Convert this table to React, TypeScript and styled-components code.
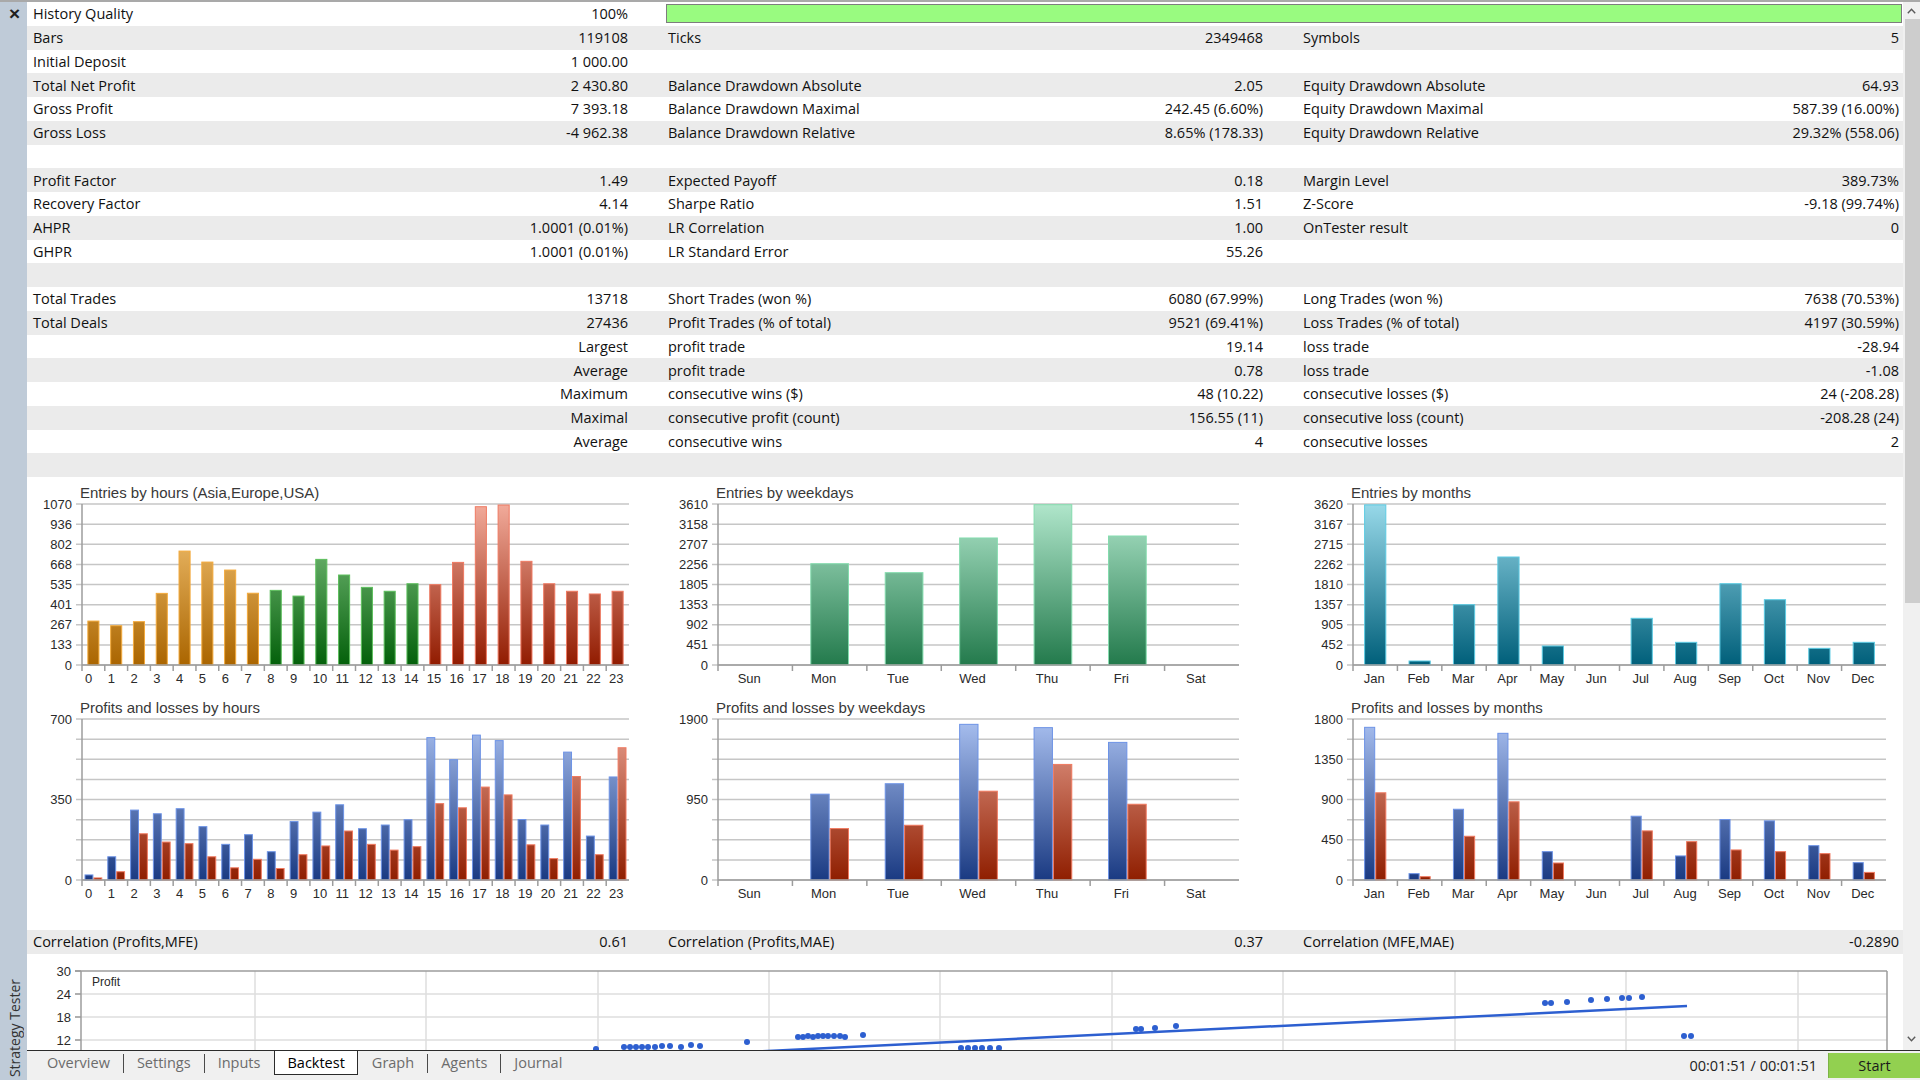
import React from 'react';
import styled, { createGlobalStyle } from 'styled-components';

const GlobalStyle = createGlobalStyle`
  html, body {
    margin: 0;
    padding: 0;
    width: 1920px;
    height: 1080px;
    overflow: hidden;
    background: #ffffff;
  }
  body {
    font-family: 'Open Sans', 'Noto Sans', sans-serif;
    color: #111111;
  }
`;

const ROW_H = 23.75;
const COLS = '636px 635px 1fr';

const PLOT_X = 55;
const PLOT_TOP = 27;
const PLOT_BOTTOM = 188;
const CHART_W = 635;
const CHART_H = 215;

const Page = styled.div`
  display: flex;
  width: 1920px;
  height: 1080px;
  border-top: 2px solid #a9a9a9;
  box-sizing: border-box;
`;

const Sidebar = styled.aside`
  flex: none;
  width: 27px;
  background: #bfcbd8;
  display: flex;
  flex-direction: column;
  justify-content: space-between;
  align-items: center;
  padding: 1px 0 6px 2px;
  box-sizing: border-box;
`;

const CloseGlyph = styled.span`
  font-family: 'Liberation Sans', sans-serif;
  font-weight: 700;
  font-size: 19px;
  line-height: 22px;
  color: #202020;
`;

const SideTitle = styled.span`
  writing-mode: vertical-rl;
  transform: rotate(180deg);
  font-size: 14px;
  color: #333333;
  white-space: nowrap;
  margin-bottom: -3px;
`;

const Main = styled.div`
  flex: 1;
  min-width: 0;
  display: flex;
  flex-direction: column;
`;

const Body = styled.div`
  flex: 1;
  min-height: 0;
  display: flex;
  overflow: hidden;
`;

const Report = styled.div`
  flex: 1;
  min-width: 0;
  display: flex;
  flex-direction: column;
`;

const StatRow = styled.div<{ $shade: boolean }>`
  flex: none;
  display: grid;
  grid-template-columns: ${COLS};
  height: ${ROW_H}px;
  align-items: center;
  background: ${({ $shade }) => ($shade ? '#ebebeb' : '#ffffff')};
  font-size: 14.5px;
  white-space: nowrap;
`;

const Cell = styled.div<{ $last?: boolean }>`
  display: flex;
  justify-content: space-between;
  align-items: center;
  padding: 0 ${({ $last }) => ($last ? 4 : 35)}px 0 5px;
  &:first-child {
    padding-left: 6px;
  }
`;

const QualityBar = styled.div`
  grid-column: 2 / 4;
  height: 19px;
  margin: 0 1px 0 3px;
  background: #99fb80;
  border: 1px solid #7d7d7d;
  box-sizing: border-box;
`;

const ChartArea = styled.div`
  flex: none;
  height: 453px;
  display: grid;
  grid-template-columns: ${COLS};
  align-content: start;
`;

const ChartColumn = styled.div`
  display: flex;
  flex-direction: column;
`;

const ChartSvg = styled.svg`
  display: block;
  overflow: visible;
`;

const ChartTitle = styled.text`
  font-family: 'Liberation Sans', Arial, sans-serif;
  font-size: 15px;
  fill: #383838;
`;

const TickText = styled.text`
  font-family: 'Liberation Sans', Arial, sans-serif;
  font-size: 13px;
  fill: #2a2a2a;
`;

const ScatterWrap = styled.div`
  flex: 1;
  min-height: 0;
  overflow: hidden;
`;

const Scrollbar = styled.div`
  flex: none;
  width: 17px;
  background: #f0f0f0;
  display: flex;
  flex-direction: column;
`;

const ScrollButton = styled.div<{ $bottom?: boolean }>`
  height: 17px;
  display: flex;
  align-items: center;
  justify-content: center;
  margin-bottom: ${({ $bottom }) => ($bottom ? 3 : 0)}px;
`;

const ScrollThumb = styled.div`
  height: 584px;
  margin: 0 0 0 2px;
  background: #cdcdcd;
`;

const ScrollSpacer = styled.div`
  flex: 1;
`;

const TabBar = styled.div`
  flex: none;
  height: 30px;
  display: flex;
  align-items: flex-start;
  background: #f0f0f0;
  border-top: 1.5px solid #2b2b2b;
  box-sizing: border-box;
  padding-left: 7px;
  font-size: 14.5px;
`;

const Tab = styled.div<{ $active?: boolean }>`
  height: 23px;
  display: flex;
  align-items: center;
  padding: 0 ${({ $active }) => ($active ? 12 : 13)}px;
  margin: ${({ $active }) => ($active ? '0 1px' : '0')};
  color: ${({ $active }) => ($active ? '#000000' : '#6c6c6c')};
  background: ${({ $active }) => ($active ? '#ffffff' : 'transparent')};
  border: ${({ $active }) => ($active ? '1.5px solid #2b2b2b' : 'none')};
  border-top: none;
`;

const TabSep = styled.div`
  width: 1px;
  height: 19px;
  margin-top: 3px;
  background: #4a4a4a;
`;

const TabSpacer = styled.div`
  flex: 1;
`;

const Timer = styled.div`
  height: 28px;
  display: flex;
  align-items: center;
  margin-right: 11px;
  color: #222222;
`;

const StartButton = styled.div`
  width: 92px;
  height: 25px;
  margin-top: 1.5px;
  display: flex;
  align-items: center;
  justify-content: center;
  background: #92d050;
  border-left: 1px solid #7db446;
  box-sizing: border-box;
  color: #1a1a1a;
`;

type Tone = { id: string; top: string; bottom: string; edge: string };

const TONES: Record<string, Tone> = {
  asia: { id: 'asia', top: '#f9ca7c', bottom: '#aa6500', edge: '#f3aa3c' },
  europe: { id: 'europe', top: '#8fce8f', bottom: '#03600a', edge: '#5cbf5c' },
  usa: { id: 'usa', top: '#f2ab9b', bottom: '#911b00', edge: '#ef7a62' },
  weekday: { id: 'weekday', top: '#b0e6cb', bottom: '#237a4c', edge: '#84dcae' },
  month: { id: 'month', top: '#98d9e9', bottom: '#005f7a', edge: '#5ccbe3' },
  profit: { id: 'profit', top: '#a9c0f0', bottom: '#1a3a82', edge: '#6d93e6' },
  loss: { id: 'loss', top: '#e9a292', bottom: '#8f1e00', edge: '#f07a60' },
};

type Series = { values: number[]; tone: (i: number) => Tone };

interface BarChartProps {
  id: string;
  title: string;
  categories: string[];
  labels: string[];
  max: number;
  plotWidth: number;
  barShare: number;
  series: Series[];
  // category captions: 'start' puts them at a fixed offset left of the centre
  labelAnchor?: 'middle' | 'start';
  labelDx?: number;
}

function BarChart({
  id,
  title,
  categories,
  labels,
  max,
  plotWidth,
  barShare,
  series,
  labelAnchor = 'middle',
  labelDx = 0,
}: BarChartProps) {
  const n = categories.length;
  const cw = plotWidth / n;
  const plotH = PLOT_BOTTOM - PLOT_TOP;
  const right = PLOT_X + plotWidth;
  const groupW = cw * barShare;
  const barW = groupW / series.length;

  const used: Tone[] = [];
  series.forEach((s) =>
    categories.forEach((_, i) => {
      const t = s.tone(i);
      if (!used.includes(t)) used.push(t);
    }),
  );

  return (
    <ChartSvg width={CHART_W} height={CHART_H} viewBox={`0 0 ${CHART_W} ${CHART_H}`}>
      <defs>
        {used.map((t) => (
          <linearGradient
            key={t.id}
            id={`${id}-${t.id}`}
            x1="0"
            y1={PLOT_TOP}
            x2="0"
            y2={PLOT_BOTTOM}
            gradientUnits="userSpaceOnUse"
          >
            <stop offset="0" stopColor={t.top} />
            <stop offset="1" stopColor={t.bottom} />
          </linearGradient>
        ))}
      </defs>
      <ChartTitle x={53} y={20.5}>
        {title}
      </ChartTitle>
      {labels.map((label, k) => {
        const y = PLOT_BOTTOM - (k * plotH) / 8;
        return (
          <g key={k}>
            <line x1={PLOT_X - 6} x2={right} y1={y} y2={y} stroke="#c6c6c6" strokeWidth={1.5} />
            {label && (
              <TickText x={PLOT_X - 10} y={y + 4.5} textAnchor="end">
                {label}
              </TickText>
            )}
          </g>
        );
      })}
      {series.map((s, si) =>
        s.values.map((v, i) => {
          if (!v) return null;
          const h = (v / max) * plotH;
          const x = PLOT_X + i * cw + (cw - groupW) / 2 + si * barW;
          const t = s.tone(i);
          return (
            <rect
              key={`${si}-${i}`}
              x={x + 0.5}
              y={PLOT_BOTTOM - h}
              width={barW - 1}
              height={h}
              fill={`url(#${id}-${t.id})`}
              stroke={t.edge}
              strokeWidth={1}
            />
          );
        }),
      )}
      <line x1={PLOT_X} x2={PLOT_X} y1={PLOT_TOP} y2={PLOT_BOTTOM + 6} stroke="#9c9c9c" strokeWidth={1.5} />
      <line x1={PLOT_X} x2={right} y1={PLOT_BOTTOM} y2={PLOT_BOTTOM} stroke="#9c9c9c" strokeWidth={1.5} />
      {categories.map((c, i) => (
        <g key={c}>
          {i > 0 && (
            <line
              x1={PLOT_X + i * cw}
              x2={PLOT_X + i * cw}
              y1={PLOT_BOTTOM}
              y2={PLOT_BOTTOM + 6}
              stroke="#9c9c9c"
              strokeWidth={1.5}
            />
          )}
          <TickText
            x={PLOT_X + i * cw + cw / 2 + labelDx}
            y={PLOT_BOTTOM + 18}
            textAnchor={labelAnchor}
          >
            {c}
          </TickText>
        </g>
      ))}
    </ChartSvg>
  );
}

// scatter: origin of the svg sits at (27, 954) on screen
const SC_OX = 27;
const SC_OY = 954;
const SC_LEFT = 54;
const SC_TOP = 17;
const SC_RIGHT = 1860;

const scatterDots: [number, number][] = [
  [596, 1049], [624, 1047], [630, 1047], [636, 1047], [642, 1047], [648, 1047], [655, 1047],
  [662, 1046], [670, 1046], [681, 1047], [691, 1045], [700, 1046], [747, 1042],
  [798, 1037], [803, 1037], [808, 1036], [813, 1037], [818, 1036], [823, 1036], [828, 1036],
  [834, 1036], [840, 1036], [845, 1037], [863, 1035],
  [961, 1048], [968, 1048], [975, 1048], [982, 1048], [990, 1048], [999, 1048],
  [1136, 1029], [1141, 1029], [1155, 1028], [1176, 1026],
  [1545, 1003], [1551, 1003], [1567, 1002], [1591, 1000], [1607, 999], [1622, 998],
  [1629, 998], [1642, 997], [1684, 1036], [1691, 1036],
];

const scatterCols = [255, 426, 598, 769, 940, 1112, 1283, 1455, 1626, 1798];
const scatterRows: [string, number][] = [
  ['30', 971],
  ['24', 994],
  ['18', 1017],
  ['12', 1040],
];

function ScatterChart() {
  return (
    <ChartSvg width={1876} height={100} viewBox="0 0 1876 100">
      {scatterCols.map((x) => (
        <line key={x} x1={x - SC_OX} x2={x - SC_OX} y1={SC_TOP} y2={100} stroke="#dedede" strokeWidth={1.5} />
      ))}
      {scatterRows.map(([label, y]) => (
        <g key={label}>
          <line
            x1={SC_LEFT - 6}
            x2={SC_RIGHT}
            y1={y - SC_OY}
            y2={y - SC_OY}
            stroke={label === '30' ? '#9c9c9c' : '#dedede'}
            strokeWidth={1.5}
          />
          <line x1={SC_LEFT - 6} x2={SC_LEFT} y1={y - SC_OY} y2={y - SC_OY} stroke="#9c9c9c" strokeWidth={1.5} />
          <TickText x={44} y={y - SC_OY + 5} textAnchor="end">
            {label}
          </TickText>
        </g>
      ))}
      <line x1={SC_LEFT} x2={SC_LEFT} y1={SC_TOP} y2={100} stroke="#9c9c9c" strokeWidth={1.5} />
      <line x1={SC_RIGHT} x2={SC_RIGHT} y1={SC_TOP} y2={100} stroke="#9c9c9c" strokeWidth={1.5} />
      <TickText x={65} y={32} style={{ fontSize: 12 }}>
        Profit
      </TickText>
      {scatterDots.map(([x, y], i) => (
        <circle key={i} cx={x - SC_OX} cy={y - SC_OY} r={3} fill="#2d5fd0" />
      ))}
      <line
        x1={700 - SC_OX}
        y1={1054.3 - SC_OY}
        x2={1687 - SC_OX}
        y2={1006 - SC_OY}
        stroke="#2d5fd0"
        strokeWidth={2.5}
      />
    </ChartSvg>
  );
}

type StatCell = [string, string] | null;
type StatLine = { cells: StatCell[]; quality?: boolean };

const stats: StatLine[] = [
  { cells: [['History Quality', '100%']], quality: true },
  { cells: [['Bars', '119108'], ['Ticks', '2349468'], ['Symbols', '5']] },
  { cells: [['Initial Deposit', '1 000.00'], null, null] },
  {
    cells: [
      ['Total Net Profit', '2 430.80'],
      ['Balance Drawdown Absolute', '2.05'],
      ['Equity Drawdown Absolute', '64.93'],
    ],
  },
  {
    cells: [
      ['Gross Profit', '7 393.18'],
      ['Balance Drawdown Maximal', '242.45 (6.60%)'],
      ['Equity Drawdown Maximal', '587.39 (16.00%)'],
    ],
  },
  {
    cells: [
      ['Gross Loss', '-4 962.38'],
      ['Balance Drawdown Relative', '8.65% (178.33)'],
      ['Equity Drawdown Relative', '29.32% (558.06)'],
    ],
  },
  { cells: [null, null, null] },
  { cells: [['Profit Factor', '1.49'], ['Expected Payoff', '0.18'], ['Margin Level', '389.73%']] },
  { cells: [['Recovery Factor', '4.14'], ['Sharpe Ratio', '1.51'], ['Z-Score', '-9.18 (99.74%)']] },
  { cells: [['AHPR', '1.0001 (0.01%)'], ['LR Correlation', '1.00'], ['OnTester result', '0']] },
  { cells: [['GHPR', '1.0001 (0.01%)'], ['LR Standard Error', '55.26'], null] },
  { cells: [null, null, null] },
  {
    cells: [
      ['Total Trades', '13718'],
      ['Short Trades (won %)', '6080 (67.99%)'],
      ['Long Trades (won %)', '7638 (70.53%)'],
    ],
  },
  {
    cells: [
      ['Total Deals', '27436'],
      ['Profit Trades (% of total)', '9521 (69.41%)'],
      ['Loss Trades (% of total)', '4197 (30.59%)'],
    ],
  },
  { cells: [['', 'Largest'], ['profit trade', '19.14'], ['loss trade', '-28.94']] },
  { cells: [['', 'Average'], ['profit trade', '0.78'], ['loss trade', '-1.08']] },
  {
    cells: [
      ['', 'Maximum'],
      ['consecutive wins ($)', '48 (10.22)'],
      ['consecutive losses ($)', '24 (-208.28)'],
    ],
  },
  {
    cells: [
      ['', 'Maximal'],
      ['consecutive profit (count)', '156.55 (11)'],
      ['consecutive loss (count)', '-208.28 (24)'],
    ],
  },
  { cells: [['', 'Average'], ['consecutive wins', '4'], ['consecutive losses', '2']] },
  { cells: [null, null, null] },
];

const hours = Array.from({ length: 24 }, (_, i) => String(i));
const weekdays = ['Sun', 'Mon', 'Tue', 'Wed', 'Thu', 'Fri', 'Sat'];
const months = ['Jan', 'Feb', 'Mar', 'Apr', 'May', 'Jun', 'Jul', 'Aug', 'Sep', 'Oct', 'Nov', 'Dec'];

const hourTone = (i: number) => (i < 8 ? TONES.asia : i < 15 ? TONES.europe : TONES.usa);

const hoursEntries = [292, 261, 288, 476, 757, 684, 631, 477, 496, 458, 702, 598, 516, 490, 540, 534, 682, 1052, 1063, 689, 540, 490, 472, 490];
const hoursProfit = [22, 101, 304, 288, 310, 232, 155, 197, 123, 254, 295, 327, 223, 239, 262, 619, 523, 630, 606, 263, 239, 556, 191, 448];
const hoursLoss = [9, 36, 201, 165, 158, 101, 53, 90, 50, 110, 148, 213, 155, 130, 145, 332, 314, 404, 370, 153, 93, 450, 110, 575];
const weekEntries = [0, 2271, 2070, 2848, 3594, 2892, 0];
const weekProfit = [0, 1013, 1136, 1837, 1798, 1624, 0];
const weekLoss = [0, 607, 646, 1048, 1364, 894, 0];
const monthEntries = [3600, 90, 1356, 2428, 427, 0, 1050, 510, 1828, 1468, 375, 510];
const monthProfit = [1707, 71, 791, 1640, 317, 0, 713, 269, 676, 661, 384, 194];
const monthLoss = [975, 37, 489, 874, 190, 0, 549, 429, 336, 317, 295, 85];

const plSeries = (profit: number[], loss: number[]): Series[] => [
  { values: profit, tone: () => TONES.profit },
  { values: loss, tone: () => TONES.loss },
];

function ChevronUp() {
  return (
    <svg width="9" height="6" viewBox="0 0 9 6">
      <polyline points="0.8,5.2 4.5,1.3 8.2,5.2" fill="none" stroke="#5a5a5a" strokeWidth="1.4" />
    </svg>
  );
}

function ChevronDown() {
  return (
    <svg width="9" height="6" viewBox="0 0 9 6">
      <polyline points="0.8,0.8 4.5,4.7 8.2,0.8" fill="none" stroke="#5a5a5a" strokeWidth="1.4" />
    </svg>
  );
}

export default function App() {
  return (
    <>
      <GlobalStyle />
      <Page>
        <Sidebar>
          <CloseGlyph>×</CloseGlyph>
          <SideTitle>Strategy Tester</SideTitle>
        </Sidebar>
        <Main>
          <Body>
            <Report>
              {stats.map((line, r) => (
                <StatRow key={r} $shade={r % 2 === 1}>
                  {line.cells.map((cell, c) => (
                    <Cell key={c} $last={c === 2}>
                      {cell && (
                        <>
                          <span>{cell[0]}</span>
                          <span>{cell[1]}</span>
                        </>
                      )}
                    </Cell>
                  ))}
                  {line.quality && <QualityBar />}
                </StatRow>
              ))}
              <ChartArea>
                <ChartColumn>
                  <BarChart
                    id="eh"
                    title="Entries by hours (Asia,Europe,USA)"
                    categories={hours}
                    labels={['0', '133', '267', '401', '535', '668', '802', '936', '1070']}
                    max={1070}
                    plotWidth={547}
                    barShare={0.53}
                    series={[{ values: hoursEntries, tone: hourTone }]}
                    labelAnchor="start"
                    labelDx={-8.5}
                  />
                  <BarChart
                    id="ph"
                    title="Profits and losses by hours"
                    categories={hours}
                    labels={['0', '', '', '', '350', '', '', '', '700']}
                    max={700}
                    plotWidth={547}
                    barShare={0.78}
                    series={plSeries(hoursProfit, hoursLoss)}
                    labelAnchor="start"
                    labelDx={-8.5}
                  />
                </ChartColumn>
                <ChartColumn>
                  <BarChart
                    id="ew"
                    title="Entries by weekdays"
                    categories={weekdays}
                    labels={['0', '451', '902', '1353', '1805', '2256', '2707', '3158', '3610']}
                    max={3610}
                    plotWidth={521}
                    barShare={0.52}
                    series={[{ values: weekEntries, tone: () => TONES.weekday }]}
                    labelDx={-6}
                  />
                  <BarChart
                    id="pw"
                    title="Profits and losses by weekdays"
                    categories={weekdays}
                    labels={['0', '', '', '', '950', '', '', '', '1900']}
                    max={1900}
                    plotWidth={521}
                    barShare={0.52}
                    series={plSeries(weekProfit, weekLoss)}
                    labelDx={-6}
                  />
                </ChartColumn>
                <ChartColumn>
                  <BarChart
                    id="em"
                    title="Entries by months"
                    categories={months}
                    labels={['0', '452', '905', '1357', '1810', '2262', '2715', '3167', '3620']}
                    max={3620}
                    plotWidth={533}
                    barShare={0.5}
                    series={[{ values: monthEntries, tone: () => TONES.month }]}
                    labelDx={-1}
                  />
                  <BarChart
                    id="pm"
                    title="Profits and losses by months"
                    categories={months}
                    labels={['0', '', '450', '', '900', '', '1350', '', '1800']}
                    max={1800}
                    plotWidth={533}
                    barShare={0.5}
                    series={plSeries(monthProfit, monthLoss)}
                    labelDx={-1}
                  />
                </ChartColumn>
              </ChartArea>
              <StatRow $shade>
                <Cell>
                  <span>Correlation (Profits,MFE)</span>
                  <span>0.61</span>
                </Cell>
                <Cell>
                  <span>Correlation (Profits,MAE)</span>
                  <span>0.37</span>
                </Cell>
                <Cell $last>
                  <span>Correlation (MFE,MAE)</span>
                  <span>-0.2890</span>
                </Cell>
              </StatRow>
              <ScatterWrap>
                <ScatterChart />
              </ScatterWrap>
            </Report>
            <Scrollbar>
              <ScrollButton>
                <ChevronUp />
              </ScrollButton>
              <ScrollThumb />
              <ScrollSpacer />
              <ScrollButton $bottom>
                <ChevronDown />
              </ScrollButton>
            </Scrollbar>
          </Body>
          <TabBar>
            <Tab>Overview</Tab>
            <TabSep />
            <Tab>Settings</Tab>
            <TabSep />
            <Tab>Inputs</Tab>
            <Tab $active>Backtest</Tab>
            <Tab>Graph</Tab>
            <TabSep />
            <Tab>Agents</Tab>
            <TabSep />
            <Tab>Journal</Tab>
            <TabSpacer />
            <Timer>00:01:51 / 00:01:51</Timer>
            <StartButton>Start</StartButton>
          </TabBar>
        </Main>
      </Page>
    </>
  );
}
